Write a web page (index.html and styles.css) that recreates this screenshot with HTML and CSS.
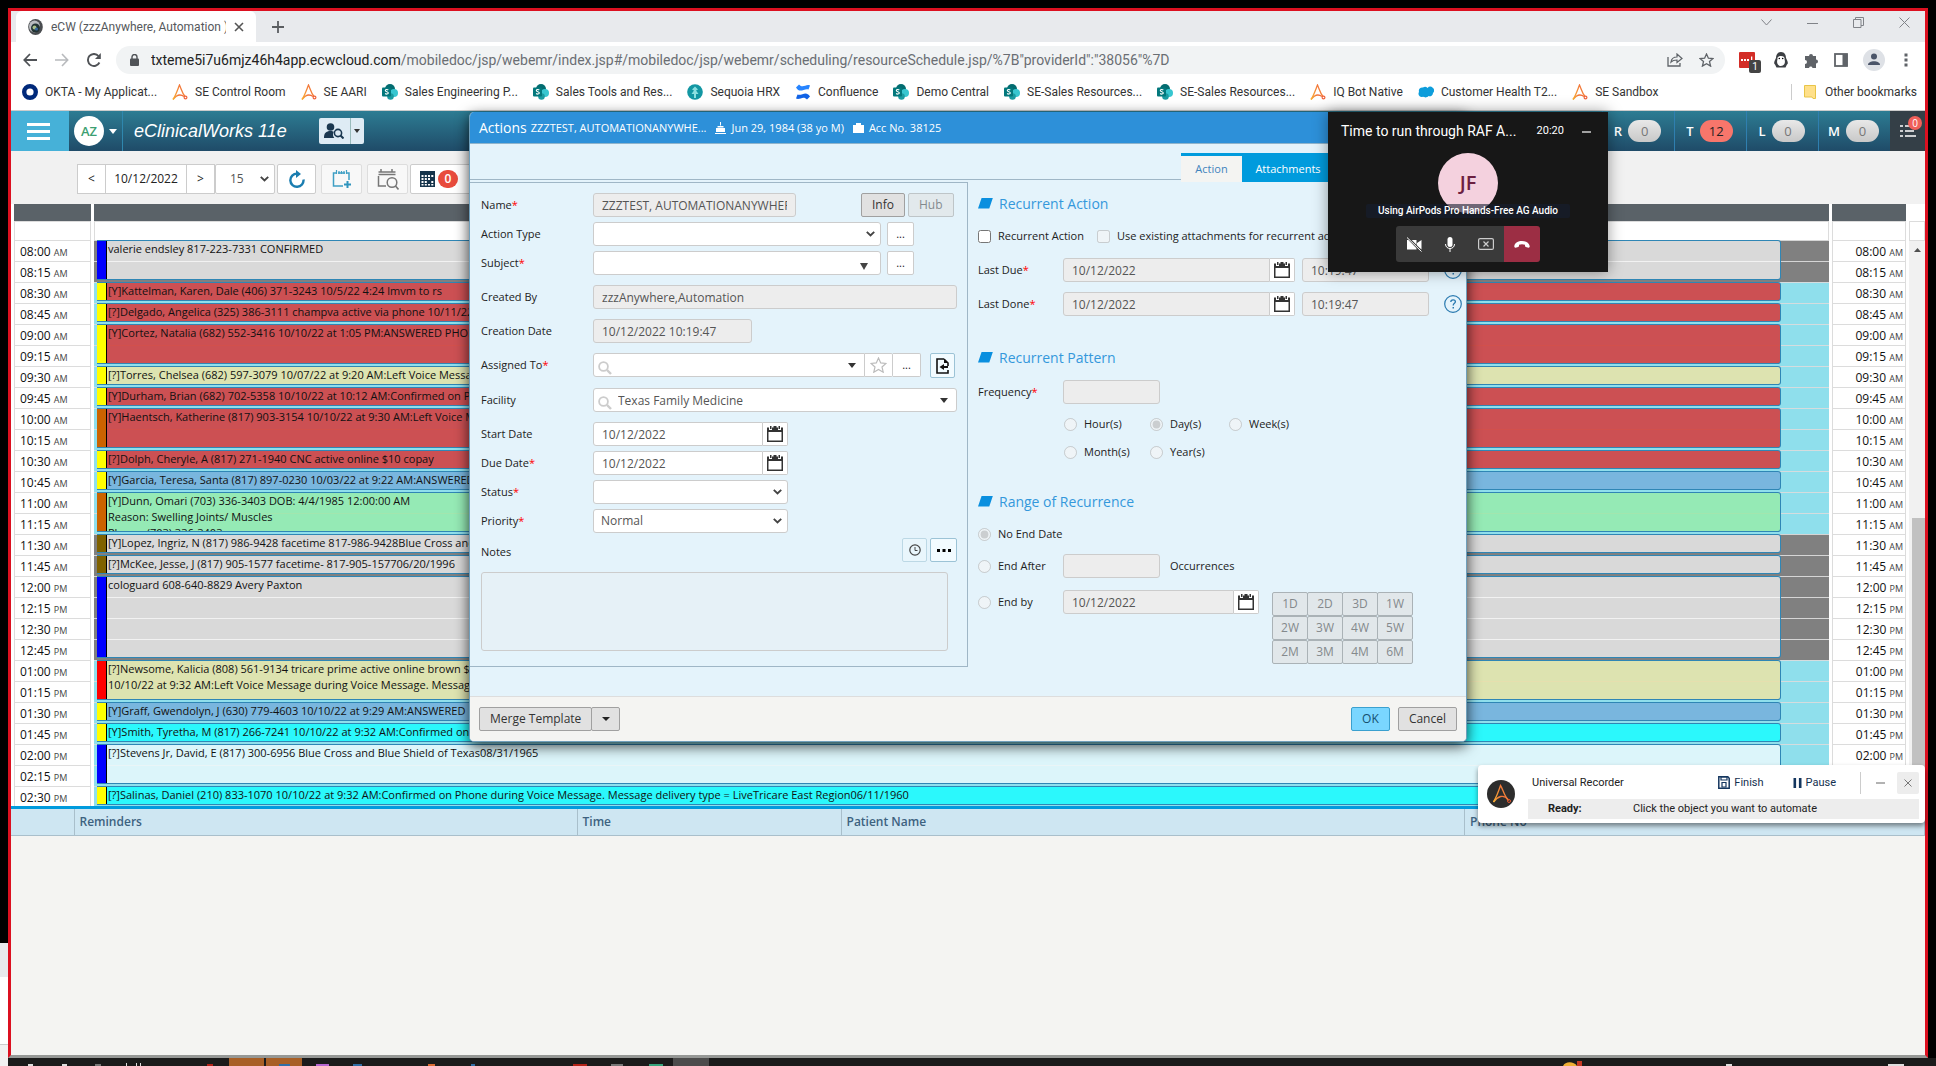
FILE: index.html
```html
<!DOCTYPE html>
<html lang="en">
<head>
<meta charset="utf-8">
<title>eCW (zzzAnywhere, Automation)</title>
<link rel="stylesheet" href="styles.css">
</head>
<body>
<svg class="defs" width="0" height="0" aria-hidden="true">
  <defs>
    <linearGradient id="warm" x1="0" y1="1" x2="1" y2="0"><stop offset="0" stop-color="#f9b233"/><stop offset="1" stop-color="#f0643c"/></linearGradient>
    <symbol id="aa" viewBox="0 0 16 16"><path d="M1 15.500C3.500 12 5.500 6 7.500 1c1.500 3 2.500 8 5.500 11.500" fill="none" stroke="url(#warm)" stroke-width="1.300"/><path d="M1 15.500c3-4 7-6 11-3" fill="none" stroke="url(#warm)" stroke-width="1.300"/><circle cx="13.500" cy="13.500" r="1.400" fill="none" stroke="#f0643c" stroke-width="1.200"/></symbol>
    <symbol id="sp" viewBox="0 0 16 16"><circle cx="8" cy="5" r="5" fill="#036c70"/><circle cx="12" cy="9" r="4" fill="#37c6d0"/><circle cx="8.500" cy="12.500" r="3.300" fill="#1a9ba1"/><rect x="0" y="3.500" width="9" height="9" rx="1" fill="#03787c"/><path d="M6.300 6c-1-.8-3-.6-3 .6 0 1.500 3 .9 3 2.400 0 1.300-2.200 1.400-3.200.5" fill="none" stroke="#fff" stroke-width="1.100"/></symbol>
    <symbol id="cal" viewBox="0 0 16 16"><path d="M0 1.500h2v2.500h3V1.500h6V4h3V1.500h2V16H0z" fill="#333"/><path d="M3 0h1.500v3H3zM11.500 0H13v3h-1.500zM6.500 0v2h3V0z" fill="#333"/><rect x="1.500" y="6" width="13" height="8.500" fill="#fff"/></symbol>
    <symbol id="mag" viewBox="0 0 14 14"><circle cx="5.500" cy="5.500" r="4.400" fill="none" stroke="#ccc" stroke-width="1.800"/><path d="M9 9l4 4" stroke="#ccc" stroke-width="2.400"/></symbol>
    <symbol id="help" viewBox="0 0 18 18"><circle cx="9" cy="9" r="8.300" fill="none" stroke="#2a7ab0" stroke-width="1.200"/><path d="M6.800 7c0-3 4.600-2.800 4.600-.2 0 1.500-2.200 1.700-2.200 3.700" fill="none" stroke="#2a7ab0" stroke-width="1.300"/><rect x="8.500" y="12" width="1.500" height="1.500" fill="#2a7ab0"/></symbol>
  </defs>
</svg>
<div class="desktop">
  <div class="behind"><div class="behind-tabs"></div><div class="behind-page"></div><div class="behind-foot"></div></div>
  <div class="screen">
    <div class="window">
      <header class="tabstrip">
        <div class="tab">
          <svg width="15" height="16" viewBox="0 0 15 16"><ellipse cx="7.500" cy="8" rx="7.300" ry="8" fill="#4a4d50"/><ellipse cx="6.500" cy="7.500" rx="5.500" ry="6" fill="#b9bcc0"/><circle cx="7.500" cy="9" r="4.500" fill="#233"/><circle cx="6.500" cy="8.500" r="2" fill="#a8c08a"/><circle cx="8.500" cy="10" r="1.600" fill="#3667a0"/></svg>
          <span class="tab-title">eCW (zzzAnywhere, Automation )</span>
          <button class="bare" aria-label="Close tab"><svg width="10" height="10" viewBox="0 0 10 10"><path d="M1 1l8 8M9 1l-8 8" stroke="#555" stroke-width="1.600"/></svg></button>
        </div>
        <button class="bare newtab" aria-label="New tab"><svg width="12" height="12" viewBox="0 0 12 12"><path d="M6 0v12M0 6h12" stroke="#5a5d60" stroke-width="1.800"/></svg></button>
        <div class="winctl">
          <svg width="11" height="7" viewBox="0 0 11 7"><path d="M.5.500l5 5.500 5-5.500" fill="none" stroke="#808388"/></svg>
          <svg width="11" height="7" viewBox="0 0 11 7"><path d="M0 4.500h11" stroke="#808388"/></svg>
          <svg width="11" height="11" viewBox="0 0 11 11"><path d="M.5 2.500h7.500v8H.5zM2.500 2.500v-2h8v8h-2.500" fill="none" stroke="#808388"/></svg>
          <svg width="11" height="11" viewBox="0 0 11 11"><path d="M.5.500l10 10M10.500.500l-10 10" stroke="#808388"/></svg>
        </div>
      </header>
      <nav class="navbar">
        <button class="bare nav" aria-label="Back"><svg width="14" height="14" viewBox="0 0 14 14"><path d="M14 7H1.500M7 1L1.300 7 7 13" fill="none" stroke="#505357" stroke-width="1.800"/></svg></button>
        <button class="bare nav" aria-label="Forward"><svg width="14" height="14" viewBox="0 0 14 14"><path d="M0 7h12.500M7 1l5.700 6L7 13" fill="none" stroke="#b8babd" stroke-width="1.600"/></svg></button>
        <button class="bare nav" aria-label="Reload"><svg width="14" height="14" viewBox="0 0 14 14"><path d="M12.400 9.500A6 6 0 1 1 11.500 3" fill="none" stroke="#505357" stroke-width="1.900"/><path d="M13.800 0v6H8z" fill="#505357"/></svg></button>
        <div class="omnibox">
          <svg width="9" height="12" viewBox="0 0 9 12"><rect y="4.500" width="9" height="7.500" rx="1" fill="#505357"/><path d="M2 5V3a2.500 2.500 0 0 1 5 0v2" fill="none" stroke="#505357" stroke-width="1.400"/></svg>
          <span class="url"><b>txteme5i7u6mjz46h4app.ecwcloud.com</b>/mobiledoc/jsp/webemr/index.jsp#/mobiledoc/jsp/webemr/scheduling/resourceSchedule.jsp/%7B"providerId":"38056"%7D</span>
          <svg width="16" height="14" viewBox="0 0 16 14"><path d="M1 4v9h12v-3" fill="none" stroke="#5f6368" stroke-width="1.300"/><path d="M4 9c.5-3.500 2.500-5 6-5V1l5 4.500-5 4V7c-3 0-4.500.5-6 2z" fill="none" stroke="#5f6368" stroke-width="1.200"/></svg>
          <svg width="15" height="14" viewBox="0 0 15 14"><path d="M7.500 1l1.900 4.200 4.600.4-3.500 3 1.100 4.500-4.100-2.400-4.100 2.400 1.100-4.500-3.500-3 4.600-.4z" fill="none" stroke="#5f6368" stroke-width="1.300"/></svg>
        </div>
        <div class="exts">
          <span class="ext"><svg width="24" height="24" viewBox="0 0 24 24"><rect x="2" y="4" width="16" height="16" rx="1" fill="#d32d27"/><path d="M4 11h2v2H4zM7 11h2v2H7zM10 11h2v2h-2zM14 8.500h1.300v5H14z" fill="#fff"/></svg><i class="ext-badge">1</i></span>
          <svg width="16" height="18" viewBox="0 0 16 18"><path d="M8 1C4.500 1 3 4 3 7c-1 2-2.500 5-1.500 6 .8.700 1 1.500 2 3.500h9c1-2 1.200-2.800 2-3.500 1-1-.5-4-1.500-6 0-3-1.500-6-5-6z" fill="#3c3f43"/><path d="M8 5c-3 0-4 2-3.500 3.500C3.500 11 4 15 8 15s4.500-4 3.500-6.500C12 7 11 5 8 5z" fill="#fff"/><circle cx="6.300" cy="7.500" r=".8"/><circle cx="9.700" cy="7.500" r=".8"/></svg>
          <svg width="15" height="15" viewBox="0 0 15 15"><path d="M5 3a2 2 0 0 1 4 0h3v3.500a2 2 0 0 1 0 4V15H8.500a1.800 1.800 0 0 0-3.500 0H1v-4a2 2 0 0 0 0-4V3z" fill="#5f6368"/></svg>
          <svg width="14" height="14" viewBox="0 0 14 14"><rect x="1" y="1" width="12" height="12" fill="none" stroke="#5f6368" stroke-width="1.800"/><rect x="8.500" y="1" width="5" height="12" fill="#5f6368"/></svg>
          <svg width="22" height="22" viewBox="0 0 22 22"><circle cx="11" cy="11" r="11" fill="#dee1e6"/><circle cx="11" cy="7.500" r="3" fill="#4a5468"/><path d="M5 16c0-5 12-5 12 0z" fill="#4a5468"/></svg>
          <svg class="kebab" width="4" height="14" viewBox="0 0 4 14"><path d="M.5.500h3v3h-3zM.5 5.500h3v3h-3zM.5 10.500h3v3h-3z" fill="#5f6368"/></svg>
        </div>
      </nav>
      <nav class="bookmarks">
        <a href="#"><svg width="16" height="16" viewBox="0 0 16 16"><circle cx="8" cy="8" r="5.800" fill="none" stroke="#00297a" stroke-width="4.400"/></svg>OKTA - My Applicat...</a>
        <a href="#"><svg width="16" height="16"><use href="#aa"/></svg>SE Control Room</a>
        <a href="#"><svg width="16" height="16"><use href="#aa"/></svg>SE AARI</a>
        <a href="#"><svg width="16" height="16"><use href="#sp"/></svg>Sales Engineering P...</a>
        <a href="#"><svg width="16" height="16"><use href="#sp"/></svg>Sales Tools and Res...</a>
        <a href="#"><svg width="16" height="16" viewBox="0 0 16 16"><circle cx="8" cy="8" r="7.800" fill="#1397a3"/><path d="M8 2.500l3 3-2 1 2.500 3.500H9V14H7v-4H4.500L7 6.500l-2-1z" fill="#8be0e0"/></svg>Sequoia HRX</a>
        <a href="#"><svg width="16" height="16" viewBox="0 0 16 16"><path d="M1 3.500L4 .5C8 5 11-.500 15 1.500l-1.500 4C9 4 5 10 1 3.500z" fill="#2684ff"/><path d="M15 12.500l-3 3C8 11 5 16.500 1 14.500l1.500-4C7 12 11 6 15 12.500z" fill="#1163e6"/></svg>Confluence</a>
        <a href="#"><svg width="16" height="16"><use href="#sp"/></svg>Demo Central</a>
        <a href="#"><svg width="16" height="16"><use href="#sp"/></svg>SE-Sales Resources...</a>
        <a href="#"><svg width="16" height="16"><use href="#sp"/></svg>SE-Sales Resources...</a>
        <a href="#"><svg width="16" height="16"><use href="#aa"/></svg>IQ Bot Native</a>
        <a href="#"><svg width="16" height="16" viewBox="0 0 16 16"><path d="M3.500 13a3.300 3.300 0 0 1-2.500-5A3.500 3.500 0 0 1 5 3.500 3.500 3.500 0 0 1 9.500 4 3.600 3.600 0 0 1 15 9a3.200 3.200 0 0 1-4.500 3C9 14 6 13.500 5.500 12.800z" fill="#0d9ddb"/></svg>Customer Health T2...</a>
        <a href="#"><svg width="16" height="16"><use href="#aa"/></svg>SE Sandbox</a>
        <a href="#" class="other"><svg width="12" height="14" viewBox="0 0 12 14"><path d="M.5.500h11v13H9l-1-1.500H.5z" fill="#ffe08a" stroke="#e8c548"/></svg>Other bookmarks</a>
      </nav>

      <main class="app">
        <header class="apphead">
          <button class="burger" aria-label="Menu"><i></i><i></i><i></i></button>
          <button class="me"><span>AZ</span><svg width="8" height="5" viewBox="0 0 8 5"><path d="M0 0h8L4 5z" fill="#fff"/></svg></button>
          <span class="brand">eClinicalWorks 11e</span>
          <div class="lookup">
            <button aria-label="Patient lookup"><svg width="20" height="16" viewBox="0 0 20 16"><circle cx="6.500" cy="4" r="3.800" fill="#1b3850"/><path d="M0 15c0-5 2-7 6.500-7 1.500 0 2.500.3 3.300.8-1.300 2-1 4.500.5 6.200z" fill="#1b3850"/><circle cx="14" cy="10" r="3.600" fill="none" stroke="#1b3850" stroke-width="1.600"/><path d="M16.500 12.500l3 3" stroke="#1b3850" stroke-width="2"/></svg></button>
            <button aria-label="Lookup options"><svg width="6" height="4" viewBox="0 0 6 4"><path d="M0 0h6L3 4z" fill="#333"/></svg></button>
          </div>
          <div class="counts">
            <span>R<b>0</b></span><span>T<b class="hot">12</b></span><span>L<b>0</b></span><span>M<b>0</b></span>
            <button class="todo" aria-label="Tasks"><svg width="16" height="12" viewBox="0 0 16 12"><path d="M0 1h3M0 6h3M0 11h3M5 1h9M5 6h9M5 11h11" stroke="#fff" stroke-width="1.600"/></svg><i>0</i></button>
          </div>
        </header>

        <section class="tools">
          <div class="dater"><button>&lt;</button><button class="date">10/12/2022</button><button>&gt;</button></div>
          <select aria-label="Interval"><option>15</option></select>
          <button class="tool" aria-label="Refresh"><svg width="16" height="18" viewBox="0 0 16 18"><path d="M14.500 9.500A6.600 6.600 0 1 1 8 3.600" fill="none" stroke="#1a7db0" stroke-width="2.400"/><path d="M7 0l5 4-5 4z" fill="#1a7db0"/></svg></button>
          <button class="tool faded" aria-label="Add appointment"><svg width="20" height="18" viewBox="0 0 20 18"><path d="M5 3H1.500v13H11M14 3h3v7M6 3h7" fill="none" stroke="#3f9fc4" stroke-width="1.500"/><path d="M4.500 0v4M7 1v3M9.500 1v3M12 1v3M14.500 0v4" stroke="#3f9fc4" stroke-width="1.200"/><path d="M15.500 11v7M12 14.500h7" stroke="#2f94bd" stroke-width="2"/></svg></button>
          <button class="tool faded" aria-label="Find appointment"><svg width="22" height="22" viewBox="0 0 22 22"><path d="M1.500 8v10H9M1.500 4h17M1.500 6.500h17M4 1v3M15 1v3" fill="none" stroke="#777" stroke-width="1.500"/><circle cx="15" cy="14.500" r="4.800" fill="none" stroke="#777" stroke-width="1.500"/><path d="M18.500 18l3 3.500" stroke="#777" stroke-width="1.600"/></svg></button>
          <button class="tool count" aria-label="Waiting list"><svg width="15" height="16" viewBox="0 0 15 16"><path d="M0 0h15v16H0z" fill="#16354c"/><path d="M1.500 4h2v2h-2zM4.800 4h2v2h-2zM8 4h2v2H8zM11.300 4h2v2h-2zM1.500 7h2v2h-2zM4.800 7h2v2h-2zM8 7h2v2H8zM1.500 10h2v2h-2zM4.800 10h2v2h-2zM11.300 10h2v2h-2zM1.500 13h2v1.500h-2zM4.800 13h2v1.500h-2zM8 13h2v1.500H8zM11.300 13h2v1.500h-2z" fill="#fff"/></svg><i>0</i></button>
        </section>

        <section class="sched">
          <div class="bar"></div><div class="bar"></div><div class="bar"></div><div class="corner"></div>
          <div class="sub"></div><div class="sub"></div><div class="sub"></div><div class="sub"></div>
          <ol class="times">
            <li>08:00 <small>AM</small></li><li>08:15 <small>AM</small></li><li>08:30 <small>AM</small></li><li>08:45 <small>AM</small></li><li>09:00 <small>AM</small></li><li>09:15 <small>AM</small></li><li>09:30 <small>AM</small></li><li>09:45 <small>AM</small></li><li>10:00 <small>AM</small></li><li>10:15 <small>AM</small></li><li>10:30 <small>AM</small></li><li>10:45 <small>AM</small></li><li>11:00 <small>AM</small></li><li>11:15 <small>AM</small></li><li>11:30 <small>AM</small></li><li>11:45 <small>AM</small></li><li>12:00 <small>PM</small></li><li>12:15 <small>PM</small></li><li>12:30 <small>PM</small></li><li>12:45 <small>PM</small></li><li>01:00 <small>PM</small></li><li>01:15 <small>PM</small></li><li>01:30 <small>PM</small></li><li>01:45 <small>PM</small></li><li>02:00 <small>PM</small></li><li>02:15 <small>PM</small></li><li>02:30 <small>PM</small></li>
          </ol>
          <div class="day">
            <div class="zone off" style="grid-row:1 / span 2"></div>
            <div class="zone" style="grid-row:3 / span 12"></div>
            <div class="zone off" style="grid-row:15 / span 6"></div>
            <div class="zone" style="grid-row:21 / span 7"></div>
            <article class="appt gray blue" style="grid-row:1 / span 2">valerie endsley 817-223-7331 CONFIRMED</article>
            <article class="appt red yellow" style="grid-row:3">[Y]Kattelman, Karen, Dale (406) 371-3243 10/5/22 4:24 lmvm to rs</article>
            <article class="appt red yellow" style="grid-row:4">[?]Delgado, Angelica (325) 386-3111 champva active via phone 10/11/22</article>
            <article class="appt red yellow" style="grid-row:5 / span 2">[Y]Cortez, Natalia (682) 552-3416 10/10/22 at 1:05 PM:ANSWERED PHONE</article>
            <article class="appt khaki yellow" style="grid-row:7">[?]Torres, Chelsea (682) 597-3079 10/07/22 at 9:20 AM:Left Voice Message</article>
            <article class="appt red yellow" style="grid-row:8">[Y]Durham, Brian (682) 702-5358 10/10/22 at 10:12 AM:Confirmed on Phone</article>
            <article class="appt red orange" style="grid-row:9 / span 2">[Y]Haentsch, Katherine (817) 903-3154 10/10/22 at 9:30 AM:Left Voice Message</article>
            <article class="appt red yellow" style="grid-row:11">[?]Dolph, Cheryle, A (817) 271-1940 CNC active online $10 copay</article>
            <article class="appt sky yellow" style="grid-row:12">[Y]Garcia, Teresa, Santa (817) 897-0230 10/03/22 at 9:22 AM:ANSWERED</article>
            <article class="appt green orange" style="grid-row:13 / span 2">[Y]Dunn, Omari (703) 336-3403 DOB: 4/4/1985 12:00:00 AM<br>Reason: Swelling Joints/ Muscles<br>Phone: (703) 336-3403</article>
            <article class="appt gray brown" style="grid-row:15">[Y]Lopez, Ingriz, N (817) 986-9428 facetime 817-986-9428Blue Cross and</article>
            <article class="appt gray brown" style="grid-row:16">[?]McKee, Jesse, J (817) 905-1577 facetime- 817-905-157706/20/1996</article>
            <article class="appt gray blue" style="grid-row:17 / span 4">cologuard 608-640-8829 Avery Paxton</article>
            <article class="appt khaki crimson" style="grid-row:21 / span 2">[?]Newsome, Kalicia (808) 561-9134 tricare prime active online brown $<br>10/10/22 at 9:32 AM:Left Voice Message during Voice Message. Message</article>
            <article class="appt sky yellow" style="grid-row:23">[Y]Graff, Gwendolyn, J (630) 779-4603 10/10/22 at 9:29 AM:ANSWERED</article>
            <article class="appt cyan yellow" style="grid-row:24">[Y]Smith, Tyretha, M (817) 266-7241 10/10/22 at 9:32 AM:Confirmed on</article>
            <article class="appt pale blue" style="grid-row:25 / span 2">[?]Stevens Jr, David, E (817) 300-6956 Blue Cross and Blue Shield of Texas08/31/1965</article>
            <article class="appt cyan yellow" style="grid-row:27">[?]Salinas, Daniel (210) 833-1070 10/10/22 at 9:32 AM:Confirmed on Phone during Voice Message. Message delivery type = LiveTricare East Region06/11/1960</article>
          </div>
          <ol class="times right">
            <li>08:00 <small>AM</small></li><li>08:15 <small>AM</small></li><li>08:30 <small>AM</small></li><li>08:45 <small>AM</small></li><li>09:00 <small>AM</small></li><li>09:15 <small>AM</small></li><li>09:30 <small>AM</small></li><li>09:45 <small>AM</small></li><li>10:00 <small>AM</small></li><li>10:15 <small>AM</small></li><li>10:30 <small>AM</small></li><li>10:45 <small>AM</small></li><li>11:00 <small>AM</small></li><li>11:15 <small>AM</small></li><li>11:30 <small>AM</small></li><li>11:45 <small>AM</small></li><li>12:00 <small>PM</small></li><li>12:15 <small>PM</small></li><li>12:30 <small>PM</small></li><li>12:45 <small>PM</small></li><li>01:00 <small>PM</small></li><li>01:15 <small>PM</small></li><li>01:30 <small>PM</small></li><li>01:45 <small>PM</small></li><li>02:00 <small>PM</small></li>
          </ol>
          <div class="scroll"><svg width="7" height="4" viewBox="0 0 7 4"><path d="M0 4h7L3.500 0z" fill="#505050"/></svg><div class="thumb"></div></div>
        </section>

        <table class="reminders">
          <colgroup><col class="c-flag"><col class="c-rem"><col class="c-time"><col><col class="c-phone"></colgroup>
          <thead><tr><th></th><th>Reminders</th><th>Time</th><th>Patient Name</th><th>Phone No</th></tr></thead>
        </table>

        <form class="modal">
          <header class="mhead"><h1>Actions</h1><span>ZZZTEST, AUTOMATIONANYWHE...</span>
            <svg width="11" height="12" viewBox="0 0 11 12"><path d="M0 11h11v1H0zM1 6h9v4H1zM2.500 4h6v1.500h-6zM5 0h1v3.500H5z" fill="#fff"/></svg><span>Jun 29, 1984 (38 yo M)</span>
            <svg width="11" height="10" viewBox="0 0 11 10"><path d="M0 2h11v8H0zM3 0h5v2H3z" fill="#fff"/></svg><span>Acc No. 38125</span></header>
          <div class="mtabs"><button type="button" class="on">Action</button><button type="button">Attachments</button></div>
          <div class="mbody">
            <div class="left">
              <div class="row"><label for="name">Name<em>*</em></label><input id="name" class="w-name" value="ZZZTEST, AUTOMATIONANYWHERE" disabled><div class="pair"><button type="button" class="btn">Info</button><button type="button" class="btn" disabled>Hub</button></div></div>
              <div class="row"><label for="type">Action Type</label><select id="type" class="w-type"><option></option></select><button type="button" class="more">...</button></div>
              <div class="row loose"><label for="subj">Subject<em>*</em></label><div class="combo w-type tri"><input id="subj"></div><button type="button" class="more">...</button></div>
              <div class="row loose"><label for="by">Created By</label><input id="by" class="w-full" value="zzzAnywhere,Automation" disabled></div>
              <div class="row loose"><label for="cdate">Creation Date</label><input id="cdate" class="w-cdate" value="10/12/2022 10:19:47" disabled></div>
              <div class="row loose tall"><label for="ass">Assigned To<em>*</em></label><div class="group"><div class="combo w-ass"><svg width="14" height="14"><use href="#mag"/></svg><input id="ass"><svg width="8" height="5" viewBox="0 0 8 5"><path d="M0 0h8L4 5z" fill="#333"/></svg></div><button type="button" aria-label="Favourite"><svg width="17" height="16" viewBox="0 0 17 16"><path d="M8.500 1l2.200 4.900 5.300.5-4 3.600 1.200 5.200-4.700-2.700-4.700 2.700L5 10 1 6.400l5.300-.5z" fill="none" stroke="#bbb" stroke-width="1.200"/></svg></button><button type="button">...</button></div><button type="button" class="lite docb" aria-label="Import"><svg width="13" height="16" viewBox="0 0 13 16"><path d="M8 1H1v14h11v-3M8 1l4 4v3" fill="none" stroke="#111" stroke-width="1.600"/><path d="M3.500 9L8 6v2h4v2H8v2z" fill="#111"/><path d="M8 1v4h4z" fill="#111"/></svg></button></div>
              <div class="row loose"><label for="fac">Facility</label><div class="combo w-full"><svg width="14" height="14"><use href="#mag"/></svg><input id="fac" value="Texas Family Medicine"><svg width="8" height="5" viewBox="0 0 8 5"><path d="M0 0h8L4 5z" fill="#333"/></svg></div></div>
              <div class="row"><label for="sd">Start Date</label><div class="group w-date"><input id="sd" value="10/12/2022"><button type="button" aria-label="Pick start date"><svg width="16" height="16"><use href="#cal"/></svg></button></div></div>
              <div class="row"><label for="dd">Due Date<em>*</em></label><div class="group w-date"><input id="dd" value="10/12/2022"><button type="button" aria-label="Pick due date"><svg width="16" height="16"><use href="#cal"/></svg></button></div></div>
              <div class="row"><label for="st">Status<em>*</em></label><select id="st" class="w-date"><option></option></select></div>
              <div class="row"><label for="pr">Priority<em>*</em></label><select id="pr" class="w-date"><option>Normal</option></select></div>
              <div class="row loose"><label for="notes" class="low">Notes</label><div class="noteb"><button type="button" class="lite dim" aria-label="Timestamp"><svg width="12" height="12" viewBox="0 0 12 12"><circle cx="6" cy="6" r="5.200" fill="none" stroke="#444" stroke-width="1.200"/><path d="M6 3v3.500h2.500" fill="none" stroke="#444"/></svg></button><button type="button" class="lite wide" aria-label="More notes"><svg width="14" height="3" viewBox="0 0 14 3"><path d="M0 0h3v3H0zM5.500 0h3v3h-3zM11 0h3v3h-3z"/></svg></button></div></div>
              <textarea id="notes" disabled></textarea>
            </div>
            <div class="rightp">
              <h2>Recurrent Action</h2>
              <div class="line checks"><label><input type="checkbox">Recurrent Action</label><label><input type="checkbox" disabled>Use existing attachments for recurrent actions</label></div>
              <div class="line"><label class="lab" for="ld">Last Due<em>*</em></label><div class="group w-last"><input id="ld" value="10/12/2022" disabled><button type="button" aria-label="Pick last due"><svg width="16" height="16"><use href="#cal"/></svg></button></div><input class="w-time" value="10:19:47" aria-label="Last due time" disabled><svg class="help" width="18" height="18"><use href="#help"/></svg></div>
              <div class="line"><label class="lab" for="ln">Last Done<em>*</em></label><div class="group w-last"><input id="ln" value="10/12/2022" disabled><button type="button" aria-label="Pick last done"><svg width="16" height="16"><use href="#cal"/></svg></button></div><input class="w-time" value="10:19:47" aria-label="Last done time" disabled><svg class="help" width="18" height="18"><use href="#help"/></svg></div>
              <h2 class="gap">Recurrent Pattern</h2>
              <div class="line tight"><label class="lab" for="fr">Frequency<em>*</em></label><input id="fr" class="w-num" disabled></div>
              <div class="units"><label><input type="radio" name="u" disabled>Hour(s)</label><label><input type="radio" name="u" checked disabled>Day(s)</label><label><input type="radio" name="u" disabled>Week(s)</label><label><input type="radio" name="u" disabled>Month(s)</label><label><input type="radio" name="u" disabled>Year(s)</label></div>
              <h2 class="gap close">Range of Recurrence</h2>
              <div class="line tight"><label class="lab"><input type="radio" name="r" checked disabled>No End Date</label></div>
              <div class="line wideline"><label class="lab"><input type="radio" name="r" disabled>End After</label><input class="w-num" aria-label="Occurrences" disabled><span class="occ">Occurrences</span></div>
              <div class="line top"><label class="lab"><input type="radio" name="r" disabled>End by</label><div class="group w-end"><input value="10/12/2022" aria-label="End date" disabled><button type="button" aria-label="Pick end date"><svg width="16" height="16"><use href="#cal"/></svg></button></div>
                <div class="keys"><button type="button" disabled>1D</button><button type="button" disabled>2D</button><button type="button" disabled>3D</button><button type="button" disabled>1W</button><button type="button" disabled>2W</button><button type="button" disabled>3W</button><button type="button" disabled>4W</button><button type="button" disabled>5W</button><button type="button" disabled>2M</button><button type="button" disabled>3M</button><button type="button" disabled>4M</button><button type="button" disabled>6M</button></div></div>
            </div>
          </div>
          <footer class="mfoot"><div class="split"><button type="button" class="btn">Merge Template</button><button type="button" class="btn" aria-label="Template options"><svg width="8" height="4" viewBox="0 0 8 4"><path d="M0 0h8L4 4z" fill="#222"/></svg></button></div><button type="button" class="btn ok">OK</button><button type="button" class="btn">Cancel</button></footer>
        </form>

        <aside class="call">
          <div class="call-head"><span>Time to run through RAF A...</span><time>20:20</time><button class="bare" aria-label="Minimise"><svg width="9" height="4" viewBox="0 0 9 4"><path d="M0 3h9" stroke="#ddd" stroke-width="1.400"/></svg></button></div>
          <div class="face">JF</div>
          <div class="device">Using AirPods Pro Hands-Free AG Audio</div>
          <div class="call-btns">
            <button aria-label="Camera"><svg width="17" height="15" viewBox="0 0 17 15"><path d="M1 3h9.500v9.500H1zM11 6l4.500-3v9.500L11 9.500z" fill="#fff"/><path d="M1 0l15 15" stroke="#3a3a3a" stroke-width="2.400"/><path d="M1 .5l14.500 14" stroke="#fff"/></svg></button>
            <button aria-label="Mute"><svg width="10" height="15" viewBox="0 0 10 15"><rect x="2.500" width="5" height="10" rx="2.500" fill="#fff"/><path d="M.5 7c0 6 9 6 9 0M5 12v3" fill="none" stroke="#fff"/></svg></button>
            <button aria-label="Stop sharing"><svg width="16" height="12" viewBox="0 0 16 12"><rect x=".6" y=".6" width="14.800" height="10.800" rx="1.500" fill="none" stroke="#ccc" stroke-width="1.200"/><path d="M5.500 3.500l5 5M10.500 3.500l-5 5" stroke="#ccc" stroke-width="1.200"/></svg></button>
            <button class="hang" aria-label="Hang up"><svg width="16" height="7" viewBox="0 0 16 7"><path d="M.3 5C1 1.500 4 0 8 0s7 1.500 7.700 5c.1 1.200-.5 1.800-1.200 1.700L11.800 6c-.6-.2-.8-.6-.8-1.200V3.800a10 10 0 0 0-6 0v1C5 5.400 4.800 5.800 4.200 6l-2.700.7C.8 6.800.2 6.200.3 5z" fill="#fff"/></svg></button>
          </div>
        </aside>

        <aside class="rec">
          <svg width="28" height="28" viewBox="0 0 28 28"><circle cx="14" cy="14" r="14" fill="#2d2d2d"/><path d="M6.500 22C10 16 12 10 13.500 5.500 16 9 17 16 21.500 20.500" fill="none" stroke="url(#warm)" stroke-width="1.300"/><path d="M6.500 22c4-5.500 10-8.500 15-2" fill="none" stroke="url(#warm)" stroke-width="1.300"/><circle cx="22" cy="21" r="1.500" fill="none" stroke="#e0562f"/></svg>
          <div class="rec-main">
            <div class="rec-top"><strong>Universal Recorder</strong>
              <button class="bare"><svg width="12" height="13" viewBox="0 0 12 13"><path d="M.8.8h9l1.400 1.500v9.900H.8z" fill="none" stroke="#14365f" stroke-width="1.500"/><path d="M3 1h6v3H3zM4 6.500h4V11H4z" fill="none" stroke="#14365f" stroke-width="1.200"/></svg>Finish</button>
              <button class="bare"><svg width="9" height="10" viewBox="0 0 9 10"><path d="M.5 0h2.600v10H.5zM5.900 0h2.600v10H5.900z" fill="#14365f"/></svg>Pause</button>
              <span class="rule"></span>
              <button class="bare" aria-label="Minimise recorder"><svg width="9" height="2" viewBox="0 0 9 2"><path d="M0 1h9" stroke="#666"/></svg></button>
              <button class="bare x" aria-label="Close recorder"><svg width="8" height="8" viewBox="0 0 8 8"><path d="M.5.500l7 7M7.500.500l-7 7" stroke="#777"/></svg></button>
            </div>
            <div class="rec-state"><b>Ready:</b><span>Click the object you want to automate</span></div>
          </div>
        </aside>
      </main>
    </div>
    <footer class="taskbar" aria-hidden="true">
      <svg width="100%" height="8"><path d="M221 0h35v8h-35zM258 0h36v8h-36z" fill="#a85f26"/><path d="M665 0h36v8h-36z" fill="#4c4c4c"/><path d="M20 6h5v2h-5zM54 6h5v2h-5zM118 5h1v3h-1zM128 5h1v3h-1zM132 5h1v3h-1z" fill="#ddd"/><path d="M199 6h6v2h-6zM565 6h14v2h-14z" fill="#b32318"/><path d="M308 6h13v2h-13z" fill="#b565d0"/><path d="M271 6h11v2h-11zM345 6h9v2h-9zM463 6h4v2h-4z" fill="#2f6da5"/><path d="M603 6h12v2h-12zM87 6h6v2h-6z" fill="#777"/><path d="M641 6h14v2h-14z" fill="#35a37b"/><path d="M420 6h7v2h-7z" fill="#d96b33"/><path d="M1555 8c2-5 11-5 14 0z" fill="#efae35"/><path d="M1569 3h5v5h-5z" fill="#c63a25"/><path d="M1718 6h6v2h-6zM1880 6h16v2h-16z" fill="#ddd"/></svg>
    </footer>
  </div>
</div>
</body>
</html>
```
FILE: styles.css
```css
* { box-sizing: border-box; }
body, h1, h2, ol { margin: 0; padding: 0; }
body { background: #000; font: 12px/16px "Open Sans", sans-serif; color: #222; }
button, input, select, textarea { font: inherit; color: inherit; margin: 0; }
button { padding: 0; display: flex; align-items: center; justify-content: center; }
svg { display: block; flex: none; }
em, i { font-style: normal; }
em { color: #f00; }
.defs { position: absolute; }
.bare { background: none; border: 0; }

.desktop { display: grid; grid-template-columns: 8px 1fr; height: 100vh; overflow: hidden; }
.behind { display: flex; flex-direction: column; justify-content: flex-end; }
.behind-tabs { height: 34px; background: #e8eaed; }
.behind-page { height: 68px; background: #fff; border-bottom: 1px solid #ccc; }
.behind-foot { height: 21px; background: #f1f1f1; }
.screen { display: flex; flex-direction: column; padding-top: 8px; min-width: 0; }
.window { flex: 1; min-height: 0; display: flex; flex-direction: column; margin-right: 8px; border: 3px solid #dc1020; border-bottom-color: #969896; background: #f4f4f2; }
.taskbar { height: 8px; background: #1b1b1b; flex: none; }

/* Browser chrome */
.tabstrip, .navbar, .bookmarks, .call, .rec { font-family: Roboto, "Open Sans", sans-serif; }
.tabstrip { display: flex; height: 31px; padding-left: 5px; background: #e8eaed; flex: none; }
.tab { display: flex; align-items: center; width: 240px; padding: 0 12px; gap: 8px; background: #fff; border-radius: 6px 6px 0 0; color: #55585c; }
.tab-title { flex: 1; overflow: hidden; white-space: nowrap; }
.newtab { width: 44px; }
.winctl { display: flex; align-items: center; margin-left: auto; gap: 35px; padding: 0 15px 8px 0; }
.navbar { display: flex; align-items: center; height: 36px; padding: 0 17px 0 3px; background: #fff; flex: none; }
.nav { width: 32px; height: 28px; }
.omnibox { flex: 1; display: flex; align-items: center; gap: 16px; height: 28px; margin-left: 6px; padding: 0 11px 0 14px; border-radius: 14px; background: #f1f3f4; min-width: 0; }
.url { flex: 1; font-size: 14px; color: #6a6e73; white-space: nowrap; overflow: hidden; line-height: 20px; margin-left: -4px; }
.url b { font-weight: 400; color: #222; }
.exts { display: flex; align-items: center; gap: 15px; margin-left: 12px; }
.ext { position: relative; }
.ext + svg { margin-left: -3px; }
.kebab { margin-left: 4px; }
.ext-badge { position: absolute; left: 12px; top: 12px; width: 12px; height: 13px; border-radius: 2px; background: #444; color: #fff; font-size: 10px; line-height: 13px; text-align: center; }
.bookmarks { display: flex; align-items: center; gap: 15px; height: 33px; padding: 0 8px 4px 11px; background: #fff; border-bottom: 1px solid #ccc; flex: none; }
.bookmarks a { display: flex; align-items: center; gap: 7px; color: #333; text-decoration: none; white-space: nowrap; }
.bookmarks .other { margin-left: auto; padding-left: 12px; border-left: 1px solid #ccc; height: 16px; gap: 9px; }

/* App header */
.app { position: relative; flex: 1; min-height: 0; display: flex; flex-direction: column; }
.apphead { display: flex; align-items: stretch; height: 40px; background: linear-gradient(#2d7c93, #1f4b68); color: #fff; flex: none; }
.burger { width: 58px; padding-right: 3px; border: 0; background: #46b1d8; flex-direction: column; gap: 4px; }
.burger i { width: 23px; height: 3px; background: #fff; }
.me { width: 54px; gap: 5px; border: 0; border-right: 1px solid #2f87ae; background: none; }
.me span { width: 30px; height: 30px; border-radius: 50%; background: #fff; color: #3c9f72; font: 600 13px/30px "Open Sans", sans-serif; }
.brand { align-self: center; margin-left: 11px; font: italic 18px/20px "Liberation Sans", Arial, sans-serif; }
.lookup { display: flex; align-self: center; height: 26px; margin-left: 32px; border-radius: 2px; overflow: hidden; }
.lookup button { width: 31px; border: 0; background: #deebf4; }
.lookup button + button { width: 14px; border-left: 1px solid #9bb; }
.counts { display: flex; margin-left: auto; }
.counts span { display: flex; align-items: center; justify-content: center; gap: 6px; width: 72px; padding-right: 2px; border-left: 1px solid #2f7fb0; font-size: 13px; font-weight: 600; }
.counts b { width: 33px; height: 22px; border-radius: 11px; background: linear-gradient(#e8e8e8, #c8c8c8); color: #777; font-weight: 400; text-align: center; line-height: 22px; }
.counts .hot { background: #f8766b; color: #222; }
.todo { position: relative; width: 35px; border: 0; background: #343f47; }
.todo i { position: absolute; right: 3px; top: 5px; width: 14px; height: 14px; border-radius: 50%; background: #f0605a; color: #fff; font-size: 10px; line-height: 14px; }

/* Toolbar */
.tools { display: flex; align-items: center; height: 53px; padding: 3px 0 0 66px; background: #f1f1f1; flex: none; }
.tools button, .tools select { height: 30px; border: 1px solid #ccc; background-color: #fff; }
.dater { display: flex; margin-right: 1px; }
.dater button { width: 29px; margin-right: -1px; }
.dater .date { width: 82px; }
.tools select { width: 60px; padding-left: 14px; color: #555; margin-right: 2px; border-radius: 2px; }
.tools .tool { width: 41px; margin-right: 5px; border-radius: 2px; }
.tools select + .tool { width: 39px; }
.tools .faded { background: #f8f8f8; border-color: #ddd; }
.tools .faded + .count { width: 74px; margin-left: -3px; justify-content: flex-start; padding-left: 9px; gap: 3px; }
.count i { width: 20px; height: 18px; border-radius: 9px; background: #e84b3c; color: #fff; font-weight: 600; line-height: 18px; }

select { appearance: none; background: #fff url("data:image/svg+xml,%3Csvg xmlns='http://www.w3.org/2000/svg' width='9' height='6'%3E%3Cpath d='M.8.800l3.700 3.700L8.200.800' fill='none' stroke='%23444' stroke-width='1.900'/%3E%3C/svg%3E") no-repeat right 5px center; }

/* Schedule */
.sched { display: grid; grid-template-columns: 77px minmax(0, 1fr) 74px 16px; grid-template-rows: 17px 19px 566px; column-gap: 3px; padding-left: 3px; background: #fff; border-bottom: 3px solid #009bdd; overflow: hidden; flex: none; }
.bar { background: #5a6268; }
.sub { border: 1px solid #dcdcdc; border-bottom: 0; }
.times { list-style: none; border: solid #dcdcdc; border-width: 0 1px; overflow: hidden; }
.times li { height: 21px; padding: 1px 0 0 5px; border-top: 1px solid #dcdcdc; line-height: 20px; color: #111; white-space: nowrap; }
.times small { font-size: 9px; color: #444; }
.times.right li { padding: 1px 2px 0 0; text-align: right; }
.day { display: grid; grid-template-rows: repeat(27, 21px); grid-template-columns: 3px minmax(0, 1fr) 48px; overflow: hidden; }
.zone { grid-column: 1 / -1; background: repeating-linear-gradient(#d5dcde 0 1px, #8fdfec 1px 21px); }
.zone.off { background: repeating-linear-gradient(#d5d5d5 0 1px, #808080 1px 21px); }
.appt { grid-column: 2; margin-bottom: 2px; padding-left: 11px; border: 1px solid #2f86b5; border-left: 0; border-radius: 0 3px 3px 0; overflow: hidden; white-space: nowrap; font-size: 11px; line-height: 16px; color: #111; box-shadow: inset 9px 0 var(--flag), inset 10px 0 #000; background: repeating-linear-gradient(var(--fill) 0 20px, var(--seam) 20px 21px); }
.gray { --fill: #d9d9d9; --seam: #f2f2f2; }
.red { --fill: #cc5053; --seam: #d2504c; }
.khaki { --fill: #dde3b0; --seam: #e6dfae; }
.sky { --fill: #79b6de; --seam: #79b6de; }
.green { --fill: #95eab5; --seam: #a2e6ae; }
.cyan { --fill: #2bf8fc; --seam: #2bf8fc; }
.pale { --fill: #dcf5fa; --seam: #eaf5f7; }
.yellow { --flag: #ff0; }
.blue { --flag: #00f; }
.orange { --flag: #cb6300; }
.brown { --flag: #7f6200; }
.crimson { --flag: #f00; }
.scroll { background: #f1f1f1; border-top: 1px solid #dcdcdc; display: flex; flex-direction: column; align-items: center; padding-top: 7px; }
.thumb { align-self: stretch; flex: 1; margin: 266px 0 0 3px; background: #c1c1c1; }

.reminders { width: 100%; border-collapse: collapse; table-layout: fixed; background: #cee6f2; flex: none; }
.reminders th { height: 26px; padding: 0 0 0 5px; border: solid #a9bfcb; border-width: 0 1px 1px; text-align: left; font-weight: 600; color: #3d6280; }
.reminders th:first-child { border-left: 0; }
.c-flag { width: 63px; } .c-rem { width: 503px; } .c-time { width: 264px; } .c-phone { width: 460px; }

/* Action dialog */
.modal { position: absolute; left: 0; right: 0; top: 1px; width: 998px; margin: 0 auto; background: #e4f3fb; border: 1px solid #6f9fbb; border-top: 0; border-radius: 5px; box-shadow: 0 4px 14px rgba(0,0,0,.75); overflow: hidden; }
.mhead { display: flex; align-items: center; height: 32px; padding-left: 9px; background: #2d90d9; border-bottom: 1px solid #8fb4cc; color: #fff; }
.mhead h1 { font-size: 14px; font-weight: 500; margin-right: 4px; }
.mhead span { font-size: 11px; font-weight: 500; }
.mhead svg { margin: 0 5px 0 9px; }
.mtabs { position: relative; display: flex; height: 38px; padding: 9px 0 0 711px; }
.mtabs::before { content: ""; position: absolute; left: 0; top: 35px; width: 711px; border-top: 1px solid #9fb6c6; }
.mtabs button { width: 92px; border: 0; border-top: 3px solid #009bdd; background: #009bdd; color: #fff; font-size: 11px; font-weight: 500; }
.mtabs .on { width: 61px; background: #f4f4f2; color: #3f83bd; font-weight: 400; }
.mbody { display: grid; grid-template-columns: 498px 1fr; padding-bottom: 29px; font-size: 11px; color: #222; }
.left { border: 1px solid #9fb6c6; border-left: 0; padding: 10px 10px 15px 11px; }
.row { display: flex; align-items: center; height: 24px; margin-bottom: 5px; }
.loose { margin-bottom: 10px; }
.tall { height: 25px; align-items: flex-start; }
.tall > label { line-height: 24px; }
.row > label { width: 112px; flex: none; }
.row > .low { padding-top: 4px; }
.modal input:not([type]), .modal select, .modal textarea, .combo { height: 24px; padding: 0 8px; border: 1px solid #ccc; border-radius: 3px; background-color: #fff; font-size: 12px; color: #555; min-width: 0; }
.modal input:not([type]):disabled { background: #ededed; }
.modal select { padding-left: 7px; }
.combo { display: flex; align-items: center; }
.combo svg:first-child { margin: 5px 0 0 -4px; }
.modal .combo input:not([type]) { flex: 1; height: 20px; padding: 0 6px; border: 0; }
.tri::after { content: ""; border: 4px solid transparent; border-top: 7px solid #444; border-bottom: 0; margin: 6px 4px 0 0; }
.w-name { width: 203px; }
.w-type { width: 288px; }
.w-full { width: 364px; }
.w-cdate { width: 159px; }
.w-ass { width: 272px; }
.w-date { width: 195px; }
.w-last { width: 232px; }
.w-time { width: 127px; margin-left: 7px; }
.w-num { width: 97px; }
.w-end { width: 196px; }
.pair { display: flex; gap: 3px; margin-left: 65px; }
.btn { height: 24px; min-width: 44px; padding: 0 10px; border: 1px solid #a0a0a0; border-radius: 2px; background: #e1e1e1; color: #333; font-size: 12px; }
.btn:disabled { opacity: .55; }
.more { width: 27px; height: 24px; margin-left: 6px; border: 1px solid #ccc; border-radius: 2px; background: #fff; }
.group { display: flex; }
.modal .group > input:not([type]), .group .combo { flex: 1; border-radius: 3px 0 0 3px; }
.group .w-ass { flex: none; }
.group > button { width: 25px; height: 24px; border: 1px solid #ccc; border-left: 0; border-radius: 0 2px 2px 0; background: #fff; }
.group .combo + button, .group .combo + button + button { width: 28px; }
.lite { width: 25px; height: 24px; border: 1px solid #9cc3d6; border-radius: 2px; background: #f2fbff; }
.wide { width: 27px; }
.dim { border-color: #bcd8e5; background: #e9f6fc; }
.docb { height: 25px; margin-left: 9px; }
.noteb { display: flex; gap: 3px; margin-left: auto; }
.modal textarea { display: block; width: 467px; height: 79px; background: #e6f1f7; resize: none; }
.rightp { padding: 10px 0 0 10px; }
h2 { display: flex; align-items: center; gap: 6px; height: 24px; font-size: 14px; font-weight: 400; color: #3498db; margin-bottom: 8px; }
h2::before { content: ""; width: 15px; height: 11px; margin-bottom: 2px; background: #0a8fdf; clip-path: polygon(25% 0, 100% 0, 75% 100%, 0 100%); }
h2.gap { margin-top: 30px; margin-bottom: 10px; }
h2.close { margin-bottom: 8px; }
.line { display: flex; align-items: center; height: 24px; margin-bottom: 10px; }
.line.tight { margin-bottom: 8px; }
.line.wideline { margin-bottom: 12px; }
.line.top { align-items: flex-start; }
.top .lab { height: 24px; }
.lab { display: flex; align-items: center; width: 85px; flex: none; white-space: nowrap; }
.checks { gap: 13px; }
.checks label, .units label { display: flex; align-items: center; white-space: nowrap; }
input[type=checkbox], input[type=radio] { width: 13px; height: 13px; margin: 0 7px 0 0; flex: none; }
.help { margin-left: 15px; }
.units { display: grid; grid-template-columns: 86px 79px 80px; grid-auto-rows: 24px; row-gap: 4px; margin: 0 0 -4px 86px; }
.occ { margin-left: 10px; }
.keys { display: grid; grid-template-columns: repeat(4, 35px); margin: 2px 0 0 13px; }
.keys button { height: 24px; border: 1px solid #aab2b6; margin-right: -1px; background: #e1e7ea; color: #84898c; font-size: 12px; border-radius: 2px; }
.mfoot { display: flex; align-items: center; gap: 8px; height: 45px; padding: 0 9px; background: #f4f4f2; border-top: 1px solid #ddd; }
.split { display: flex; margin-right: auto; }
.split .btn + .btn { min-width: 29px; width: 29px; margin-left: -1px; padding: 0; }
.ok { min-width: 39px; background: #7ad6ff; border-color: #3aa0cf; color: #14506f; }

/* Call window */
.call { position: absolute; right: 317px; top: 1px; width: 280px; height: 160px; display: flex; flex-direction: column; align-items: center; background: #171717; box-shadow: 0 0 14px rgba(0,0,0,.4); color: #fff; }
.call-head { display: flex; align-items: center; align-self: stretch; height: 37px; padding: 0 17px 0 13px; }
.call-head span { flex: 1; font-size: 14px; }
.call-head time { font-size: 11px; margin-right: 18px; }
.face { width: 60px; height: 60px; margin-top: 4px; border-radius: 50%; background: #f4d1de; color: #6b2040; font: 600 20px/60px "Open Sans", sans-serif; text-align: center; }
.device { height: 14px; margin-top: -9px; padding: 0 12px; border-radius: 2px; background: rgba(22,30,48,.6); font-size: 10px; font-weight: 500; line-height: 14px; white-space: nowrap; }
.call-btns { display: flex; margin-top: 8px; border-radius: 3px; overflow: hidden; }
.call-btns button { width: 36px; height: 36px; border: 0; background: #3a3a3a; }
.call-btns .hang { background: #9c2e44; }

/* Recorder bar */
.rec { position: absolute; right: 0; top: 654px; width: 447px; height: 58px; display: flex; align-items: center; gap: 13px; padding: 0 6px 0 9px; border-radius: 4px; background: #fff; box-shadow: 0 3px 5px rgba(0,0,0,.45); font-size: 11px; }
.rec-main { flex: 1; }
.rec-top { display: flex; align-items: center; height: 26px; padding-left: 4px; margin-bottom: 3px; }
.rec-top strong { flex: 1; font-weight: 400; }
.rec-top button { gap: 4px; margin-right: 29px; color: #14304f; }
.rule { width: 1px; height: 22px; background: #ccc; margin: 0 15px 0 -5px; }
.rec-top .rule + button { margin-right: 12px; }
.rec-top .x { width: 22px; height: 22px; margin: 0; border-radius: 2px; background: #ededed; }
.rec-state { display: flex; height: 20px; padding-left: 20px; background: #ededed; line-height: 20px; }
.rec-state b { width: 85px; }
```
